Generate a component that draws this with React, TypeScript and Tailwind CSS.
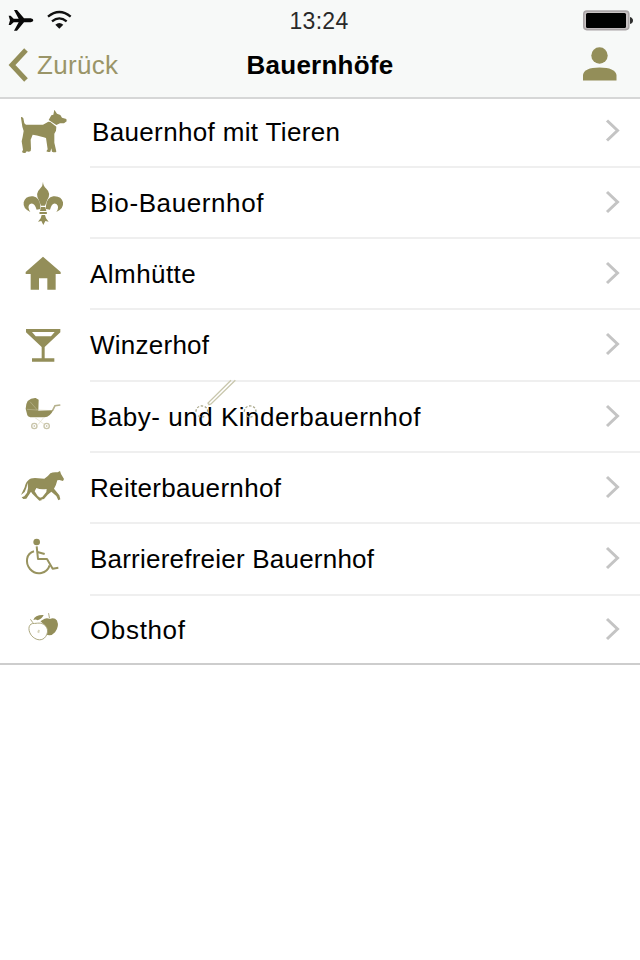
import React from 'react';
import { clsx } from 'clsx';

interface Category {
  label: string;
  viewBox: string;
  rowClass: string;
  labelClass: string;
  icon: React.ReactNode;
}

const DogIcon = (
  <path d="M33 54Q32 50 36 51L40 55L43 70L48 74H99L115 65L121 66L139 80L138 92L133 101V128L138 150L139 155Q135 158 126 155L124 145L121 155Q115 158 109 154L113 148L108 114Q96 109 68 104L62 119L63 146L62 153Q57 157 50 154L47 158Q40 161 36 156L39 149L35 124L38 110L41 93L37 80ZM116 60L124 46L130 44L133 29L141 41L151 45L156 53L169 57L170 64L162 70H150L139 75Z" />
);

const LilyIcon = (
  <g>
    <path d="M99 29Q99 41 109 50Q124 64 112 83L105 101H93L86 83Q75 64 90 50Q99 41 99 29Z" />
    <path d="M91 101Q89 77 69 73Q46 71 41 91Q38 110 61 120Q51 105 59 97Q72 88 80 113L91 111ZM108 101Q110 77 130 73Q154 71 159 91Q162 110 139 120Q149 105 140 97Q127 88 120 113L108 111Z" />
    <rect x="88" y="120" width="23" height="6" rx="2" />
    <path d="M93 105L90 117H109L106 105ZM95 129L92 139L84 149L94 147L100 159L106 147L116 149L108 139L105 129Z" />
  </g>
);

const HouseIcon = <path d="M99 38L152 84V90H137V137H112V103H87V137H62V90H47V84Z" />;

const GlassIcon = (
  <path
    fillRule="evenodd"
    d="M48 255H151V265L104 309V343H133V353H66V343H95V309L48 265ZM66 264L77 277H123L134 264Z"
  />
);

const PramIcon = (
  <g>
    <path d="M77 39Q48 38 47 71L52 91Q54 96 61 97H104Q120 96 130 75L85 77L86 44Z" />
    <path d="M51 73L82 75L126 77M82 75L60 50" stroke="#c9c5a4" strokeWidth="1.5" fill="none" />
    <path d="M128 76L135 62L151 60" stroke="#b5b18d" strokeWidth="5" fill="none" />
    <path d="M101 98L84 119M75 98L103 118" stroke="#dedbc6" strokeWidth="2" fill="none" />
    <g fill="none" stroke="#c9c5aa" strokeWidth="4">
      <circle cx="73" cy="123" r="8" />
      <circle cx="110" cy="123" r="8" />
    </g>
    <g fill="#b9b593">
      <circle cx="73" cy="123" r="2.5" />
      <circle cx="110" cy="123" r="2.5" />
    </g>
  </g>
);

const HorseIcon = (
  <path d="M55 67Q61 60 75 60L103 62Q114 56 121 46Q130 41 143 43L150 39L153 48L162 63L159 69L148 66L142 67Q138 84 132 92L148 112L151 124L145 127L139 114L124 101L113 110L102 123L90 125L88 120L97 117L109 102L110 93Q92 96 79 90L74 100L83 114L94 122L95 127L88 128L67 107L63 101L49 122L40 123L35 118L43 115L51 104L54 91L53 74Q50 90 44 102L33 111L44 88Q47 73 55 67Z" />
);

const WheelchairIcon = (
  <g fill="none" stroke="#98935f" strokeWidth="6">
    <circle cx="80" cy="36" r="10" fill="#938e59" stroke="none" />
    <path d="M80 49L84 87H111L128 116L145 113" strokeLinejoin="round" />
    <path d="M82 66L104 72" />
    <path d="M72 64C48 71 45 99 60 117C80 139 111 130 119 106" />
  </g>
);

const AppleIcon = (
  <g>
    <path d="M97 272Q108 264 120 269Q134 263 142 274Q150 293 136 310Q124 324 108 317Q116 299 102 286L91 276Z" />
    <path d="M69 272Q74 256 101 257Q94 271 82 273Q77 269 69 272Z" />
    <path d="M116 251L119 267M60 270L68 281" fill="none" stroke="#aba77f" strokeWidth="3" />
    <path
      d="M67 283C51 286 53 308 64 321C75 333 91 338 103 328C116 315 116 297 104 288C92 278 82 283 67 283Z"
      fill="white"
      stroke="#a7a379"
      strokeWidth="3"
    />
    <path d="M84 302L81 310L87 313L89 303Z" fill="#d5d2b9" />
  </g>
);

const categories: Category[] = [
  { label: 'Bauernhof mit Tieren', viewBox: '0 -3 210 207', rowClass: 'h-[69px]', labelClass: 'ml-[2px] -translate-y-[1.5px] tracking-[0.35px]', icon: DogIcon },
  { label: 'Bio-Bauernhof', viewBox: '0 -12 210 213', rowClass: 'h-[71px]', labelClass: 'tracking-[0.6px]', icon: LilyIcon },
  { label: 'Almhütte', viewBox: '0 -15 210 213', rowClass: 'h-[71px]', labelClass: 'tracking-[0.45px]', icon: HouseIcon },
  { label: 'Winzerhof', viewBox: '0 198 210 216', rowClass: 'h-[72px]', labelClass: 'tracking-[0.25px]', icon: GlassIcon },
  { label: 'Baby- und Kinderbauernhof', viewBox: '0 -9 210 213', rowClass: 'h-[71px]', labelClass: 'tracking-[0.52px]', icon: PramIcon },
  { label: 'Reiterbauernhof', viewBox: '0 -15 210 213', rowClass: 'h-[71px]', labelClass: 'tracking-[0.32px]', icon: HorseIcon },
  { label: 'Barrierefreier Bauernhof', viewBox: '0 -18 210 216', rowClass: 'h-[72px]', labelClass: 'tracking-[0.22px]', icon: WheelchairIcon },
  { label: 'Obsthof', viewBox: '0 198 210 207', rowClass: 'h-[69px]', labelClass: 'tracking-[0.65px]', icon: AppleIcon },
];

const StatusBar: React.FC = () => (
  <div className="grid h-10 grid-cols-3 items-center pr-[7px] pl-2">
    <div className="flex items-center gap-[13px]">
      <svg className="h-6 w-[26px]" viewBox="0 0 78 72" fill="#080808">
        <path d="M2 23H8L17 32H32L18 6H27L48 31H68Q76 32 76 37Q76 42 68 43H48L27 68H18L32 43H17L8 51H2L6 37Z" />
      </svg>
      <svg className="h-6 w-[25px]" viewBox="0 0 75 72" fill="none" stroke="#111" strokeWidth="7">
        <path d="M3 26Q37 -2 71 26M15 40Q37 22 59 40" />
        <path d="M25 50Q37 40 49 50L37 62Z" fill="#111" stroke="none" />
      </svg>
    </div>
    <span className="translate-y-px pr-[3px] text-center text-[23px] leading-none tracking-[0.3px] text-[#292929]">13:24</span>
    <svg className="h-[21px] w-[50px] justify-self-end" viewBox="0 0 50 21">
      <rect x="0.8" y="1.1" width="45" height="18.5" rx="3" fill="#c9c3c4" stroke="#aaa4a6" strokeWidth="1.6" />
      <rect x="3" y="3" width="40" height="15" rx="1.5" fill="#000" />
      <path d="M47 7Q50 8 50 10.5Q50 13 47 14Z" fill="#303030" />
    </svg>
  </div>
);

const CategoryRow: React.FC<{ category: Category; first: boolean; last: boolean }> = ({ category, first, last }) => (
  <li className={clsx('flex', category.rowClass, last && 'border-b-2 border-[#cdcdcd]')}>
    <svg className="ml-[10px] h-full w-[70px] shrink-0" viewBox={category.viewBox} fill="#938e59">
      {category.icon}
    </svg>
    <div className={clsx('ml-[10px] flex flex-1 items-center justify-between pr-5', !last && 'border-b-2 border-[#efefef]')}>
      <span className={clsx('text-[26px] leading-none whitespace-nowrap', category.labelClass)}>
        {category.label}
      </span>
      <svg
        className={clsx('h-6 w-[15px]', first ? '-translate-y-[2.5px]' : '-translate-y-px')}
        viewBox="0 0 15 24"
        fill="none"
        stroke="#c4c4c4"
        strokeWidth="3"
      >
        <path d="M2 2L12.5 12L2 22" />
      </svg>
    </div>
  </li>
);

const App: React.FC = () => (
  <div className="min-h-screen bg-white font-['Liberation_Sans',Arial,sans-serif] text-black">
    <header className="h-[99px] border-b-2 border-[#d6d7d7] bg-[#f7f9f8]">
      <StatusBar />
      <nav className="grid h-[50px] grid-cols-3 items-center pr-[23px] pl-2 text-[26px] leading-none">
        <button className="flex items-center gap-[9px] text-[#9a9568]">
          <svg className="h-[34px] w-5" viewBox="0 0 20 34" fill="none" stroke="#938e59" strokeWidth="5">
            <path d="M18 2L4 17L18 32" />
          </svg>
          <span className="tracking-[0.3px]">Zurück</span>
        </button>
        <h1 className="pl-[15px] text-center font-bold tracking-[0.25px]">Bauernhöfe</h1>
        <svg className="h-[34px] w-[35px] -translate-y-px justify-self-end" viewBox="0 0 35 34" fill="#938e59">
          <circle cx="17.5" cy="8.5" r="8.2" />
          <path d="M1 33.5V28Q2 20.5 17.5 20.5Q33 20.5 34.5 28V33.5Z" />
        </svg>
      </nav>
    </header>

    <main className="relative">
      <ul>
        {categories.map((category, index) => (
          <CategoryRow
            key={category.label}
            category={category}
            first={index === 0}
            last={index === categories.length - 1}
          />
        ))}
      </ul>
      {/* Loose outline of the pram handle and wheels */}
      <svg
        className="pointer-events-none absolute top-[271px] left-[180px] h-[70px] w-[100px]"
        viewBox="0 0 300 210"
        fill="none"
        stroke="#c9c7ad"
        strokeWidth="4"
      >
        <path d="M153 31L84 99L87 104L93 102L166 31" />
        <g stroke="#aba98c" strokeDasharray="7 5">
          <path d="M48 125C48 102 83 102 83 125M55 137Q65 145 76 137" />
          <path d="M193 125C193 102 228 102 228 125M200 137Q210 145 221 137" />
        </g>
      </svg>
    </main>
  </div>
);

export default App;
